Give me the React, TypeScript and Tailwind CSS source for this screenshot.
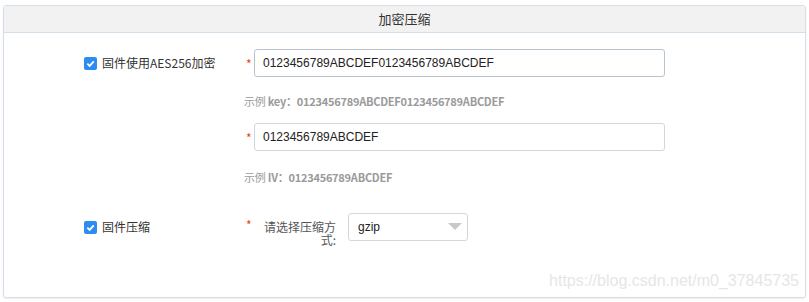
const cjk = { fontFamily: '"Microsoft YaHei", "Noto Sans CJK SC", "Liberation Sans", sans-serif' }
const latin = { fontFamily: '"Liberation Sans", Arial, "Noto Sans CJK SC", sans-serif' }

function Check() {
  return (
    <span className="flex h-[13px] w-[13px] items-center justify-center rounded-[2px] bg-[#2d8cf0]">
      <svg width="9" height="9" viewBox="0 0 10 10">
        <path d="M1.5 5.2 L4 7.6 L8.6 2.6" fill="none" stroke="#fff" strokeWidth="2" />
      </svg>
    </span>
  )
}

function Star() {
  return <span className="w-[8px] pt-[2px] text-[12px] leading-none text-[#ed3f14]">*</span>
}

export default function App() {
  return (
    <div className="h-[302px] w-[809px] bg-white px-[3px] pt-[5px]" style={cjk}>
      <div className="overflow-hidden rounded-[3px] border border-[#d5dfea] shadow-[0_1px_2px_rgba(0,0,0,0.08)]">
        {/* 标题 */}
        <div className="flex h-[27px] items-center justify-center border-b border-[#d5dfea] bg-[#f2f2f2] text-[13px] text-[#333]">
          加密压缩
        </div>

        <div className="relative h-[264px] pl-[80px] pt-[16px]">
          {/* AES256 */}
          <div className="flex items-center">
            <div className="flex w-[162px] items-center gap-[5px] text-[12px] text-[#333]">
              <Check />
              <span>固件使用AES256加密</span>
            </div>
            <Star />
            <div
              className="flex h-[28px] w-[411px] items-center rounded-[3px] border border-[#b9c3ce] px-[8px] text-[12px] text-[#222]"
              style={latin}
            >
              0123456789ABCDEF0123456789ABCDEF
            </div>
          </div>
          <div className="ml-[160px] mt-[16px] text-[11px] font-bold tracking-[-0.25px] text-[#9a9a9a]">
            <span className="font-normal">示例</span> key：0123456789ABCDEF0123456789ABCDEF
          </div>

          <div className="mt-[13px] flex items-center">
            <div className="w-[162px]" />
            <Star />
            <div
              className="flex h-[28px] w-[411px] items-center rounded-[3px] border border-[#cfd7df] px-[8px] text-[12px] text-[#222]"
              style={latin}
            >
              0123456789ABCDEF
            </div>
          </div>
          <div className="ml-[160px] mt-[18px] text-[11px] font-bold tracking-[-0.25px] text-[#9a9a9a]">
            <span className="font-normal">示例</span> IV：0123456789ABCDEF
          </div>

          {/* 压缩 */}
          <div className="mt-[28px] flex items-start">
            <div className="flex h-[28px] w-[162px] items-center gap-[5px] text-[12px] text-[#333]">
              <Check />
              <span>固件压缩</span>
            </div>
            <div className="flex pt-[4px]">
              <Star />
            </div>
            <div className="w-[82px] pt-[7px] text-right text-[12px] leading-[13px] text-[#555]">请选择压缩方式:</div>
            <div
              className="ml-[12px] flex h-[28px] w-[120px] items-center justify-between rounded-[3px] border border-[#cfd7df] pl-[9px] pr-[5px] text-[12px] text-[#222]"
              style={latin}
            >
              <span>gzip</span>
              <svg width="14" height="8" viewBox="0 0 14 8">
                <path d="M0 0 H14 L7 7 Z" fill="#c5c8cc" />
              </svg>
            </div>
          </div>

          <div className="absolute bottom-[4px] right-[6px] text-[16px] text-[#e6e6e6]" style={latin}>
            https://blog.csdn.net/m0_37845735
          </div>
        </div>
      </div>
    </div>
  )
}
